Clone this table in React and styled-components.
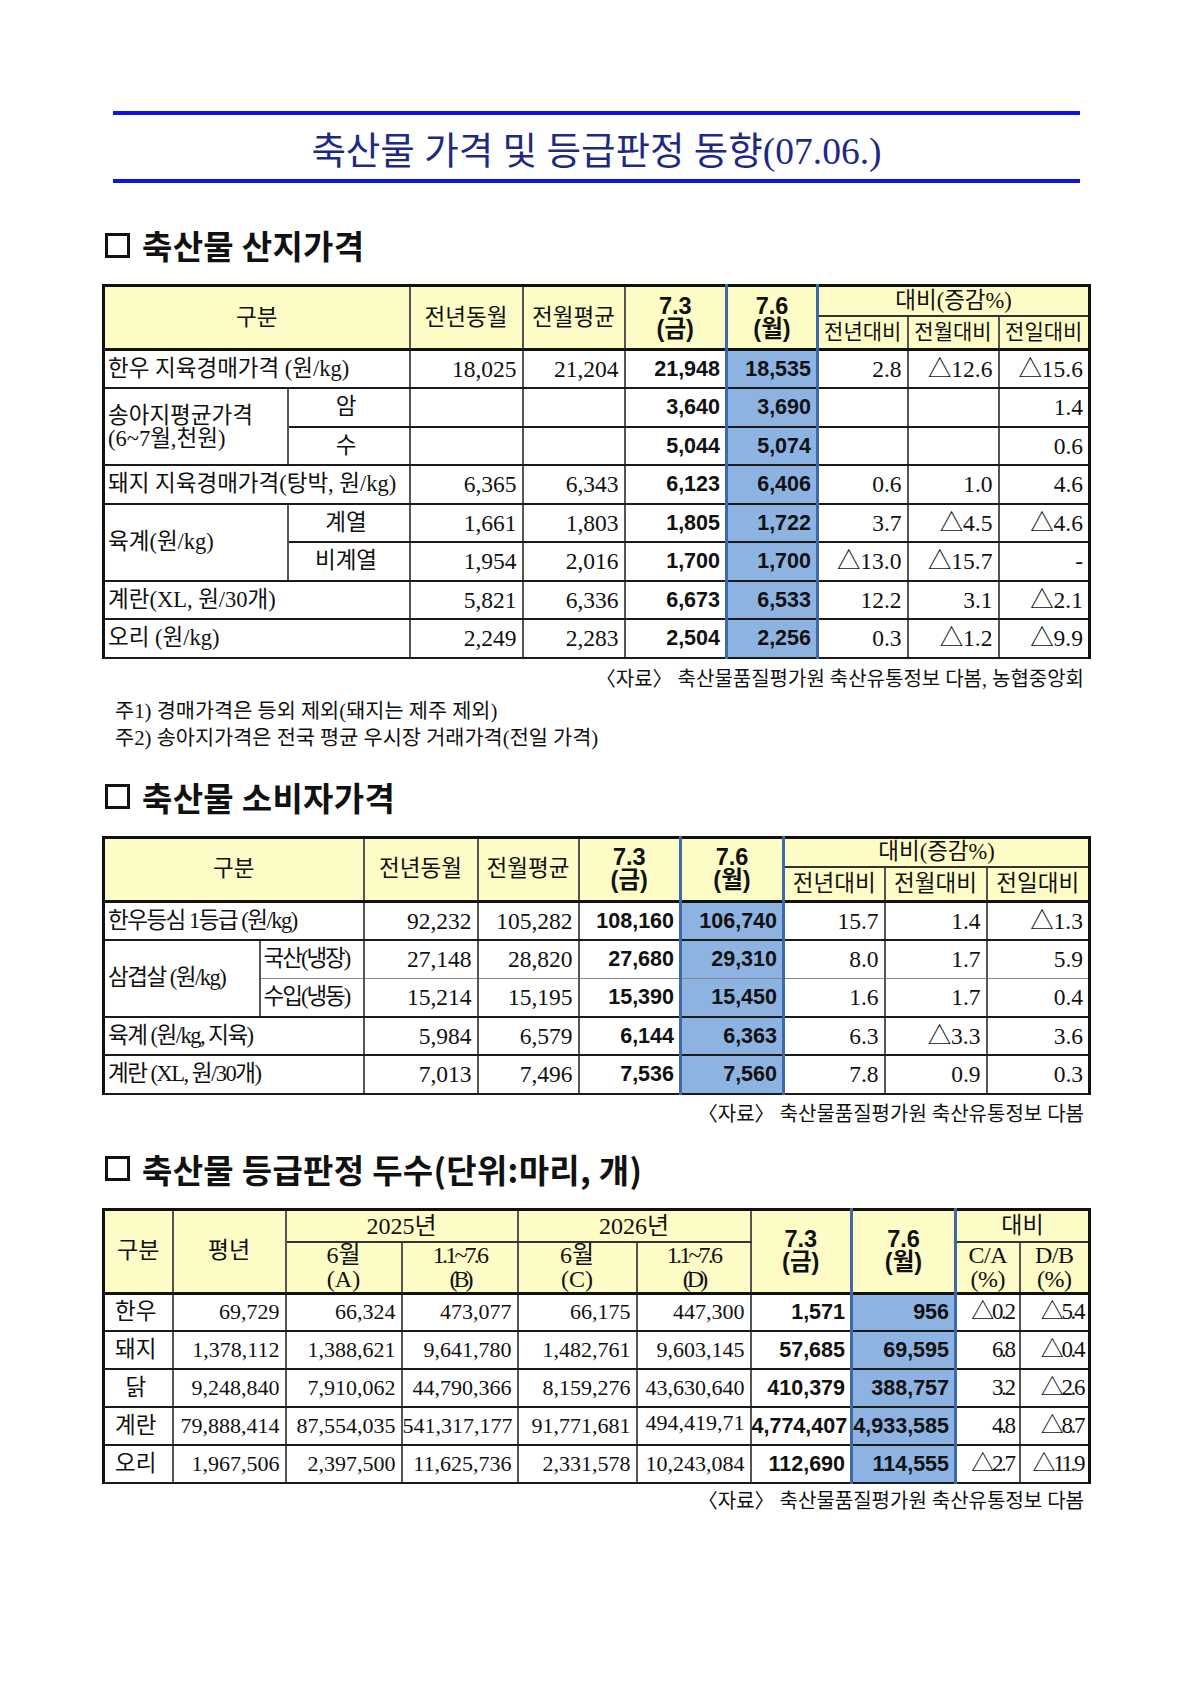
import React from 'react'
import styled, { createGlobalStyle, css } from 'styled-components'

const GlobalStyle = createGlobalStyle`
  html, body {
    margin: 0;
    padding: 0;
    background: #fff;
  }
  body {
    font-family: "Liberation Serif", "Noto Sans CJK KR", serif;
    color: #111;
  }
`

const Page = styled.div`
  width: 1189px;
  box-sizing: border-box;
  padding: 111px 101px 140px 102px;
`

const TitleBar = styled.div`
  margin: 0 8px 0 11px;
  height: 64px;
  border-top: 4px solid #0a14e8;
  border-bottom: 4px solid #0a14e8;
  display: flex;
  align-items: center;
  justify-content: center;
  font-size: 37.5px;
  color: #1c2a86;
`

const Heading = styled.h2`
  margin: ${p => p.$top}px 0 ${p => p.$bottom}px 3px;
  height: 34px;
  display: flex;
  align-items: center;
  gap: 12px;
  font-family: "Noto Sans CJK KR", sans-serif;
  font-weight: 700;
  font-size: 33px;
  line-height: 34px;
  letter-spacing: 0.3px;
  color: #111;
`

const Square = styled.span`
  flex: none;
  width: 25px;
  height: 25px;
  box-sizing: border-box;
  border: 3px solid #111;
`

const Table = styled.table`
  width: 986px;
  table-layout: fixed;
  border-collapse: collapse;
  border: 3px solid #111;
  border-bottom-width: 2px;

  thead {
    border-bottom: 3px solid #111;
  }
`

const Col = styled.col`
  width: ${p => p.$w}px;
`

const Row = styled.tr`
  height: ${p => p.$h}px;
`

const blueEdge = css`
  border-left: 3px solid #3d6aa6;
  border-right: 3px solid #3d6aa6;
`

const Th = styled.th`
  padding: 0;
  background: #fdfcc6;
  border: 2px solid #333;
  border-left-color: #555;
  border-right-color: #555;
  text-align: center;
  vertical-align: middle;
  font-family: ${p => (p.$bold ? '"Liberation Sans"' : '"Liberation Serif"')}, "Noto Sans CJK KR", sans-serif;
  font-weight: ${p => (p.$bold ? 700 : 400)};
  font-size: ${p => p.$size || 22.5}px;
  line-height: ${p => p.$lh || (p.$bold ? 23 : 22)}px;
  letter-spacing: ${p => p.$ls || 0}px;
  white-space: nowrap;
  ${p => p.$blue && blueEdge}
`

const Td = styled.td`
  padding: 0 ${p => (p.$align === 'left' ? 0 : 5)}px 0 ${p => (p.$align === 'left' ? 3 : 0)}px;
  border: 2px solid #1a1a1a;
  border-left-color: #555;
  border-right-color: #555;
  border-top-width: ${p => (p.$thinTop ? 1 : 2)}px;
  border-bottom-width: ${p => (p.$thinBottom ? 1 : 2)}px;
  ${p => (p.$thinTop ? 'border-top-color: #888;' : '')}
  ${p => (p.$thinBottom ? 'border-bottom-color: #888;' : '')}
  text-align: ${p => p.$align || 'right'};
  vertical-align: middle;
  white-space: nowrap;
  overflow: visible;
  font-family: ${p => (p.$bold ? '"Liberation Sans"' : '"Liberation Serif"')}, "Noto Sans CJK KR", sans-serif;
  font-weight: ${p => (p.$bold ? 700 : 400)};
  font-size: ${p => p.$size || (p.$bold ? 21.5 : 23.5)}px;
  line-height: 22px;
  letter-spacing: ${p => p.$ls || 0}px;
  background: ${p => (p.$blue ? '#8db3e2' : '#fff')};
  ${p => p.$blue && blueEdge}
  ${p => p.$lift && 'padding-bottom: 6px;'}
`

const Label = styled(Td)`
  font-size: 22.5px;
  line-height: ${p => (p.$twoLine ? 23 : 22)}px;
`

const Squeeze = styled.span`
  letter-spacing: -4px;
`

const Source = styled.div`
  margin-top: ${p => p.$top}px;
  padding-right: 4px;
  text-align: right;
  font-size: 20px;
  line-height: 24px;
`

const Notes = styled.div`
  margin-top: 6px;
  padding-left: 13px;
  font-size: 20.8px;
  line-height: 27px;
`

const t1Cols = [184, 122, 113, 102, 102, 91, 90, 91, 91]
const t2Cols = [156, 104, 114, 101, 102, 103, 101, 102, 103]
const t3Cols = [69, 113, 116, 116, 119, 114, 101, 104, 64, 70]

// 7 values: 전년동월, 전월평균, 7.3, 7.6, 전년대비, 전월대비, 전일대비
const priceCells = (vals, rest = {}) =>
  vals.map((v, i) => (
    <Td key={i} $bold={i === 2 || i === 3} $blue={i === 3} {...rest}>
      {v}
    </Td>
  ))

const Colgroup = ({ widths }) => (
  <colgroup>
    {widths.map((w, i) => (
      <Col key={i} $w={w} />
    ))}
  </colgroup>
)

const PriceHead = ({ narrow }) => (
  <thead>
    <Row $h={30}>
      <Th colSpan={2} rowSpan={2}>구분</Th>
      <Th rowSpan={2}>전년동월</Th>
      <Th rowSpan={2}>전월평균</Th>
      <Th rowSpan={2} $bold $size={23.5}>
        7.3
        <br />
        (금)
      </Th>
      <Th rowSpan={2} $bold $blue $size={23.5}>
        7.6
        <br />
        (월)
      </Th>
      <Th colSpan={3}>대비(증감%)</Th>
    </Row>
    <Row $h={34}>
      <Th $size={narrow ? 21 : 22.5}>전년대비</Th>
      <Th $size={narrow ? 21 : 22.5}>전월대비</Th>
      <Th $size={narrow ? 21 : 22.5}>전일대비</Th>
    </Row>
  </thead>
)

const ProducerTable = () => (
  <Table>
    <Colgroup widths={t1Cols} />
    <PriceHead narrow />
    <tbody>
      <Row $h={38.5}>
        <Label colSpan={2} $align="left">한우 지육경매가격 (원/kg)</Label>
        {priceCells(['18,025', '21,204', '21,948', '18,535', '2.8', '△12.6', '△15.6'])}
      </Row>
      <Row $h={38.5}>
        <Label rowSpan={2} $align="left" $twoLine>
          송아지평균가격
          <br />
          (6~7월,천원)
        </Label>
        <Label $align="center">암</Label>
        {priceCells(['', '', '3,640', '3,690', '', '', '1.4'])}
      </Row>
      <Row $h={38.5}>
        <Label $align="center">수</Label>
        {priceCells(['', '', '5,044', '5,074', '', '', '0.6'])}
      </Row>
      <Row $h={38.5}>
        <Label colSpan={2} $align="left">돼지 지육경매가격(탕박, 원/kg)</Label>
        {priceCells(['6,365', '6,343', '6,123', '6,406', '0.6', '1.0', '4.6'])}
      </Row>
      <Row $h={38.5}>
        <Label rowSpan={2} $align="left">육계(원/kg)</Label>
        <Label $align="center">계열</Label>
        {priceCells(['1,661', '1,803', '1,805', '1,722', '3.7', '△4.5', '△4.6'])}
      </Row>
      <Row $h={38.5}>
        <Label $align="center">비계열</Label>
        {priceCells(['1,954', '2,016', '1,700', '1,700', '△13.0', '△15.7', '-'])}
      </Row>
      <Row $h={38.5}>
        <Label colSpan={2} $align="left">계란(XL, 원/30개)</Label>
        {priceCells(['5,821', '6,336', '6,673', '6,533', '12.2', '3.1', '△2.1'])}
      </Row>
      <Row $h={38.5}>
        <Label colSpan={2} $align="left">오리 (원/kg)</Label>
        {priceCells(['2,249', '2,283', '2,504', '2,256', '0.3', '△1.2', '△9.9'])}
      </Row>
    </tbody>
  </Table>
)

const ConsumerTable = () => (
  <Table>
    <Colgroup widths={t2Cols} />
    <PriceHead />
    <tbody>
      <Row $h={38.5}>
        <Label colSpan={2} $align="left" $ls={-1.5}>한우등심 1등급 (원/kg)</Label>
        {priceCells(['92,232', '105,282', '108,160', '106,740', '15.7', '1.4', '△1.3'])}
      </Row>
      <Row $h={38.5}>
        <Label rowSpan={2} $align="left" $ls={-1.5}>삼겹살 (원/kg)</Label>
        <Label $align="left" $ls={-2} $thinBottom>국산(냉장)</Label>
        {priceCells(['27,148', '28,820', '27,680', '29,310', '8.0', '1.7', '5.9'], { $thinBottom: true })}
      </Row>
      <Row $h={38.5}>
        <Label $align="left" $ls={-2} $thinTop>수입(냉동)</Label>
        {priceCells(['15,214', '15,195', '15,390', '15,450', '1.6', '1.7', '0.4'], { $thinTop: true })}
      </Row>
      <Row $h={38.5}>
        <Label colSpan={2} $align="left" $ls={-1.5}>육계 (원/kg, 지육)</Label>
        {priceCells(['5,984', '6,579', '6,144', '6,363', '6.3', '△3.3', '3.6'])}
      </Row>
      <Row $h={38.5}>
        <Label colSpan={2} $align="left" $ls={-1.5}>계란 (XL, 원/30개)</Label>
        {priceCells(['7,013', '7,496', '7,536', '7,560', '7.8', '0.9', '0.3'])}
      </Row>
    </tbody>
  </Table>
)

const gradeRows = [
  ['한우', '69,729', '66,324', '473,077', '66,175', '447,300', '1,571', '956', '△0.2', '△5.4'],
  ['돼지', '1,378,112', '1,388,621', '9,641,780', '1,482,761', '9,603,145', '57,685', '69,595', '6.8', '△0.4'],
  ['닭', '9,248,840', '7,910,062', '44,790,366', '8,159,276', '43,630,640', '410,379', '388,757', '3.2', '△2.6'],
  ['계란', '79,888,414', '87,554,035', '541,317,177', '91,771,681', '494,419,71', '4,774,407', '4,933,585', '4.8', '△8.7'],
  ['오리', '1,967,506', '2,397,500', '11,625,736', '2,331,578', '10,243,084', '112,690', '114,555', '△2.7', '△11.9'],
]

const GradeTable = () => (
  <Table>
    <Colgroup widths={t3Cols} />
    <thead>
      <Row $h={33}>
        <Th rowSpan={2} $size={23}>구분</Th>
        <Th rowSpan={2} $size={23}>평년</Th>
        <Th colSpan={2} $size={24}>2025년</Th>
        <Th colSpan={2} $size={24}>2026년</Th>
        <Th rowSpan={2} $bold $size={23.5}>
          7.3
          <br />
          (금)
        </Th>
        <Th rowSpan={2} $bold $blue $size={23.5}>
          7.6
          <br />
          (월)
        </Th>
        <Th colSpan={2} $size={23}>대비</Th>
      </Row>
      <Row $h={51}>
        <Th $size={24} $lh={24}>
          6월
          <br />
          (A)
        </Th>
        <Th $size={24} $lh={24} $ls={-2.8}>
          1.1~7.6
          <br />
          <Squeeze>(B)</Squeeze>
        </Th>
        <Th $size={24} $lh={24}>
          6월
          <br />
          (C)
        </Th>
        <Th $size={24} $lh={24} $ls={-2.8}>
          1.1~7.6
          <br />
          <Squeeze>(D)</Squeeze>
        </Th>
        <Th $size={24} $lh={24} $ls={-0.5}>
          C/A
          <br />
          (%)
        </Th>
        <Th $size={24} $lh={24} $ls={-0.5}>
          D/B
          <br />
          (%)
        </Th>
      </Row>
    </thead>
    <tbody>
      {gradeRows.map(([name, ...vals]) => (
        <Row key={name} $h={38}>
          <Label $align="center">{name}</Label>
          {vals.map((v, i) => (
            <Td
              key={i}
              $bold={i === 5 || i === 6}
              $blue={i === 6}
              $size={i > 6 ? 23 : i < 5 ? 22 : 21.5}
              $ls={i > 6 ? -2.4 : 0}
              $lift={v === '494,419,71'}
            >
              {v}
            </Td>
          ))}
        </Row>
      ))}
    </tbody>
  </Table>
)

const App = () => (
  <>
    <GlobalStyle />
    <Page>
      <TitleBar>축산물 가격 및 등급판정 동향(07.06.)</TitleBar>

      <Heading $top={45} $bottom={22}>
        <Square />
        축산물 산지가격
      </Heading>
      <ProducerTable />
      <Source $top={8}>〈자료〉 축산물품질평가원 축산유통정보 다봄, 농협중앙회</Source>
      <Notes>
        주1) 경매가격은 등외 제외(돼지는 제주 제외)
        <br />
        주2) 송아지가격은 전국 평균 우시장 거래가격(전일 가격)
      </Notes>

      <Heading $top={29} $bottom={22}>
        <Square />
        축산물 소비자가격
      </Heading>
      <ConsumerTable />
      <Source $top={7}>〈자료〉 축산물품질평가원 축산유통정보 다봄</Source>

      <Heading $top={26} $bottom={22}>
        <Square />
        축산물 등급판정 두수(단위:마리, 개)
      </Heading>
      <GradeTable />
      <Source $top={5}>〈자료〉 축산물품질평가원 축산유통정보 다봄</Source>
    </Page>
  </>
)

export default App
